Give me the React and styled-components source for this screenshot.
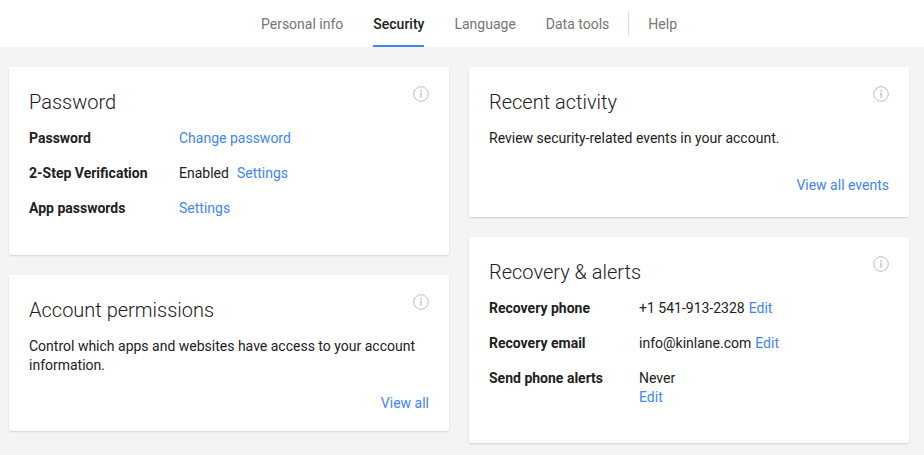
import React from 'react';
import styled, { createGlobalStyle } from 'styled-components';

const GlobalStyle = createGlobalStyle`
  body {
    margin: 0;
    background: #f4f4f4;
    font-family: Roboto, 'Liberation Sans', sans-serif;
    color: #212121;
  }
`;

const Header = styled.div`
  height: 47px;
  background: #fff;
  display: flex;
  justify-content: center;
  align-items: stretch;
  padding-left: 14px;
`;

const NavItem = styled.div`
  display: flex;
  align-items: center;
  margin: 0 15px;
  font-size: 14px;
  color: ${p => (p.active ? '#212121' : '#757575')};
  font-weight: ${p => (p.active ? 500 : 400)};
  border-bottom: 2px solid ${p => (p.active ? '#4285f4' : 'transparent')};
  border-top: 2px solid transparent;
`;

const Divider = styled.div`
  width: 1px;
  height: 25px;
  background: #ddd;
  align-self: center;
  margin: 0 4px;
`;

const Grid = styled.div`
  display: grid;
  grid-template-columns: 440px 440px;
  gap: 20px;
  padding: 20px 9px;
`;

const Column = styled.div`
  display: flex;
  flex-direction: column;
  gap: 20px;
`;

const Card = styled.div`
  position: relative;
  background: #fff;
  border-radius: 2px;
  box-shadow: 0 1px 2px rgba(0, 0, 0, 0.15);
  padding: 22px 20px 20px;
  min-height: ${p => p.h || 0}px;
  box-sizing: border-box;
`;

const Title = styled.h2`
  margin: 0 0 14px;
  font-size: 20px;
  font-weight: 300;
  color: #212121;
  line-height: 26px;
`;

const Info = styled.svg`
  position: absolute;
  top: 19px;
  right: 20px;
`;

const Row = styled.div`
  display: flex;
  font-size: 14px;
  line-height: 19px;
  margin-bottom: 16px;
`;

const Label = styled.div`
  width: 150px;
  font-weight: 700;
  color: #212121;
`;

const Value = styled.div`
  color: #212121;
`;

const Link = styled.a`
  color: #4285f4;
  text-decoration: none;
  margin-left: ${p => p.ml || 0}px;
`;

const Text = styled.p`
  margin: 0;
  font-size: 14px;
  line-height: 19px;
`;

const Footer = styled.div`
  text-align: right;
  font-size: 14px;
  margin-top: ${p => p.mt}px;
`;

const InfoIcon = () => (
  <Info width="16" height="16" viewBox="0 0 16 16">
    <circle cx="8" cy="8" r="7.3" fill="none" stroke="#bdbdbd" strokeWidth="1" />
    <circle cx="8" cy="4.8" r="0.9" fill="#bdbdbd" />
    <rect x="7.3" y="6.6" width="1.4" height="5" fill="#bdbdbd" />
  </Info>
);

export default function App() {
  return (
    <>
      <GlobalStyle />
      <Header>
        <NavItem>Personal info</NavItem>
        <NavItem active>Security</NavItem>
        <NavItem>Language</NavItem>
        <NavItem>Data tools</NavItem>
        <Divider />
        <NavItem>Help</NavItem>
      </Header>
      <Grid>
        <Column>
          <Card h={188}>
            <InfoIcon />
            <Title>Password</Title>
            <Row><Label>Password</Label><Link>Change password</Link></Row>
            <Row><Label>2-Step Verification</Label><Value>Enabled</Value><Link ml={8}>Settings</Link></Row>
            <Row><Label>App passwords</Label><Link>Settings</Link></Row>
          </Card>
          <Card h={150}>
            <InfoIcon />
            <Title>Account permissions</Title>
            <Text>Control which apps and websites have access to your account information.</Text>
            <Footer mt={20}><Link>View all</Link></Footer>
          </Card>
        </Column>
        <Column>
          <Card h={150}>
            <InfoIcon />
            <Title>Recent activity</Title>
            <Text>Review security-related events in your account.</Text>
            <Footer mt={29}><Link>View all events</Link></Footer>
          </Card>
          <Card h={204}>
            <InfoIcon />
            <Title>Recovery &amp; alerts</Title>
            <Row><Label>Recovery phone</Label><Value>+1 541-913-2328</Value><Link ml={4}>Edit</Link></Row>
            <Row><Label>Recovery email</Label><Value>info@kinlane.com</Value><Link ml={4}>Edit</Link></Row>
            <Row>
              <Label>Send phone alerts</Label>
              <Value>Never<br /><Link>Edit</Link></Value>
            </Row>
          </Card>
        </Column>
      </Grid>
    </>
  );
}
